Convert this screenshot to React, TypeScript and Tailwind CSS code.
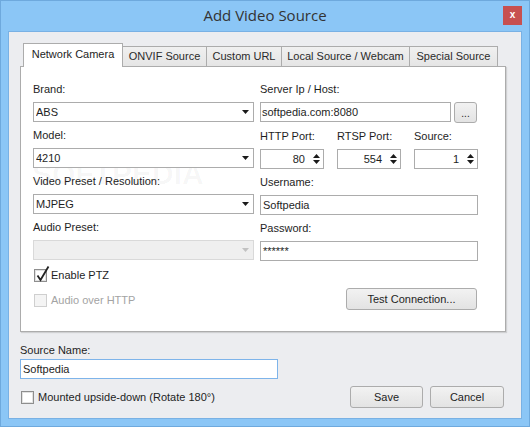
import React from "react";

const Arrow = ({ color = "#000" }: { color?: string }) => (
  <svg width="7" height="4" viewBox="0 0 7 4" className="shrink-0">
    <polygon points="0,0 7,0 3.5,4" fill={color} />
  </svg>
);

const Combo = ({ value, disabled }: { value?: string; disabled?: boolean }) => (
  <div
    className={
      disabled
        ? "h-[20px] border border-[#d9d9d9] bg-[#efefef] flex items-center pl-[2px] pr-[4px]"
        : "h-[20px] border border-[#acacac] bg-white flex items-center pl-[2px] pr-[4px]"
    }
  >
    <span className="flex-1 truncate">{value}</span>
    <Arrow color={disabled ? "#c2c2c2" : "#1a1a1a"} />
  </div>
);

const TextBox = ({ value, className = "" }: { value: string; className?: string }) => (
  <div className={"h-[20px] border border-[#acacac] bg-white flex items-center pl-[1px] " + className}>
    {value}
  </div>
);

const Spin = ({ value }: { value: string }) => (
  <div className="h-[20px] w-[64px] border border-[#acacac] bg-white flex items-center justify-end pr-[3px]">
    <span>{value}</span>
    <div className="ml-[8px] flex flex-col gap-[2px]">
      <svg width="7" height="4" viewBox="0 0 7 4">
        <polygon points="0,4 7,4 3.5,0" fill="#1a1a1a" />
      </svg>
      <Arrow color="#1a1a1a" />
    </div>
  </div>
);

const Label = ({ children, className = "" }: { children: React.ReactNode; className?: string }) => (
  <div className={"h-[14px] leading-[14px] " + className}>{children}</div>
);

const Check = ({ label, checked, disabled }: { label: string; checked?: boolean; disabled?: boolean }) => (
  <div className="flex items-center h-[13px]">
    <div
      className={
        disabled
          ? "relative ml-[1px] w-[13px] h-[13px] border border-[#cfcfcf] bg-[#f4f4f4]"
          : "relative ml-[1px] w-[13px] h-[13px] border border-[#8e8e8e] bg-white shadow-[inset_0_0_0_1px_#e2e2e2]"
      }
    >
      {checked && (
        <svg width="14" height="17" viewBox="0 0 14 17" className="absolute left-[1px] -top-[5px]">
          <path d="M1.5 10.5 L4.5 15 L12.5 1.5" fill="none" stroke="#222" strokeWidth="1.8" />
        </svg>
      )}
    </div>
    <span className={disabled ? "ml-[4px] text-[#a3a3a3]" : "ml-[4px]"}>{label}</span>
  </div>
);

const Button = ({ children, className = "" }: { children: React.ReactNode; className?: string }) => (
  <div
    className={
      "h-[22px] border border-[#acacac] rounded-[3px] bg-linear-to-b from-[#f2f2f2] to-[#e3e3e3] flex items-center justify-center " +
      className
    }
  >
    {children}
  </div>
);

const tabs = [
  { name: "ONVIF Source", w: "w-[84px]" },
  { name: "Custom URL", w: "w-[75px]" },
  { name: "Local Source / Webcam", w: "w-[128px]" },
  { name: "Special Source", w: "w-[88px]" },
];

export default function App() {
  return (
    <div className="w-[530px] h-[427px] bg-[#8bc6f6] border border-[#6ea9dd] flex flex-col font-['Liberation_Sans',Arial,sans-serif] text-[11px] text-[#1e1e1e]">
      {/* title bar */}
      <div className="relative h-[30px] flex items-center justify-center">
        <span className="font-['Open_Sans',sans-serif] text-[15px] text-[#333] -mt-[1px]">Add Video Source</span>
        <div className="absolute right-[7px] top-[5px] w-[19px] h-[19px] bg-[#c75050] flex items-center justify-center text-white font-bold text-[10px] leading-none pb-[2px]">
          x
        </div>
      </div>

      {/* client area */}
      <div className="mx-[7px] mb-[7px] flex-1 bg-[#ecedf0] border border-[#79b1e4] pl-[11px] pt-[11px]">
        {/* tabs */}
        <div className="flex items-end ml-[3px] -mb-px relative z-10">
          <div className="w-[100px] h-[24px] bg-white border-x border-t border-[#acacac] flex items-center justify-center pb-[2px]">
            Network Camera
          </div>
          {tabs.map((t) => (
            <div
              key={t.name}
              className={
                t.w +
                " h-[21px] border border-l-0 border-[#acacac] bg-linear-to-b from-[#f0f0f0] to-[#e5e5e5] flex items-center justify-center text-[#2a2a2a]"
              }
            >
              {t.name}
            </div>
          ))}
        </div>

        {/* tab panel */}
        <div className="relative w-[486px] h-[266px] bg-white border border-[#acacac] shadow-[1px_1px_1px_rgba(0,0,0,0.12)] pl-[12px] pt-[15px] flex">
          {/* faint watermark */}
          <div className="absolute left-[11px] top-[90px] text-[30px] leading-[34px] font-bold text-black/[0.035] select-none pointer-events-none">
            SOFTPEDIA
          </div>

          {/* left column */}
          <div className="w-[221px] flex flex-col relative">
            <Label>Brand:</Label>
            <div className="mt-[6px]">
              <Combo value="ABS" />
            </div>
            <Label className="mt-[6px]">Model:</Label>
            <div className="mt-[6px]">
              <Combo value="4210" />
            </div>
            <Label className="mt-[6px]">Video Preset / Resolution:</Label>
            <div className="mt-[6px]">
              <Combo value="MJPEG" />
            </div>
            <Label className="mt-[6px]">Audio Preset:</Label>
            <div className="mt-[6px]">
              <Combo disabled />
            </div>
            <div className="mt-[9px]">
              <Check label="Enable PTZ" checked />
            </div>
            <div className="mt-[12px]">
              <Check label="Audio over HTTP" disabled />
            </div>
          </div>

          {/* right column */}
          <div className="w-[218px] ml-[6px] flex flex-col relative">
            <Label>Server Ip / Host:</Label>
            <div className="mt-[6px] flex items-start gap-[3px]">
              <TextBox value="softpedia.com:8080" className="w-[191px]" />
              <div className="w-[23px] h-[21px] border border-[#acacac] rounded-[3px] bg-linear-to-b from-[#f2f2f2] to-[#e3e3e3] flex items-end justify-center pb-[3px] text-[10px] leading-none">
                ...
              </div>
            </div>
            <div className="mt-[6px] flex gap-[13px]">
              <div>
                <Label>HTTP Port:</Label>
                <div className="mt-[6px]">
                  <Spin value="80" />
                </div>
              </div>
              <div>
                <Label>RTSP Port:</Label>
                <div className="mt-[6px]">
                  <Spin value="554" />
                </div>
              </div>
              <div>
                <Label>Source:</Label>
                <div className="mt-[6px]">
                  <Spin value="1" />
                </div>
              </div>
            </div>
            <Label className="mt-[6px]">Username:</Label>
            <div className="mt-[6px]">
              <TextBox value="Softpedia" className="pl-[2px]" />
            </div>
            <Label className="mt-[6px]">Password:</Label>
            <div className="mt-[6px]">
              <TextBox value="******" className="pl-[2px] items-start pt-[1px]" />
            </div>
            <div className="mt-[27px] self-end mr-[1px]">
              <Button className="w-[131px]">Test Connection...</Button>
            </div>
          </div>
        </div>

        {/* below panel */}
        <Label className="mt-[11px]">Source Name:</Label>
        <div className="mt-[2px] w-[258px] h-[20px] border border-[#7eb4ea] bg-white flex items-center pl-[2px]">
          Softpedia
        </div>
        <div className="mt-[7px] w-[486px] h-[22px] flex items-center justify-between pr-[2px]">
          <Check label="Mounted upside-down (Rotate 180°)" />
          <div className="flex gap-[7px]">
            <Button className="w-[73px]">Save</Button>
            <Button className="w-[74px]">Cancel</Button>
          </div>
        </div>
      </div>
    </div>
  );
}
